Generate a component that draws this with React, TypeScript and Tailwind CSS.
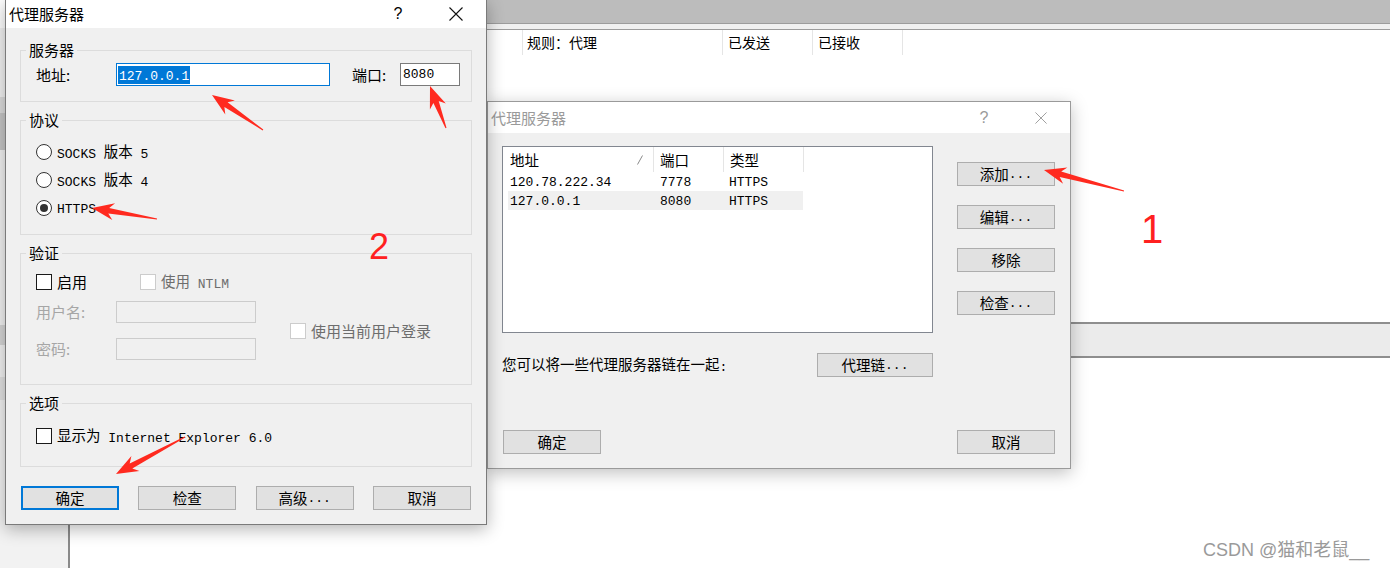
import React from "react";

const cjk = "font-['Noto_Sans_CJK_SC',sans-serif]";

type Arrow = { tail: [number, number]; tip: [number, number] };

const arrows: Arrow[] = [
  { tail: [263, 130], tip: [212, 95] },
  { tail: [446, 128], tip: [430, 86] },
  { tail: [157, 219], tip: [92, 208] },
  { tail: [185, 437], tip: [116, 474] },
  { tail: [1124, 191], tip: [1044, 170] },
];

function arrowPoints({ tail, tip }: Arrow) {
  const [x0, y0] = tail;
  const [x1, y1] = tip;
  const len = Math.hypot(x1 - x0, y1 - y0);
  const ux = (x1 - x0) / len;
  const uy = (y1 - y0) / len;
  const pt = (s: number, t: number) =>
    `${(x0 + ux * s - uy * t).toFixed(1)},${(y0 + uy * s + ux * t).toFixed(1)}`;
  return [
    pt(0, -0.5),
    pt(len - 17, -2.8),
    pt(len - 22, -8.5),
    pt(len, 0),
    pt(len - 22, 8.5),
    pt(len - 17, 2.8),
    pt(0, 0.5),
  ].join(" ");
}

// SimSun-like text: ascii in mono, CJK in Noto
const Sim = ({ text }: { text: string }) => {
  const mixed = /[^\x00-\x7f]/.test(text);
  return (
    <>
      {(text.match(/[\x00-\x7f]+|[^\x00-\x7f]+/g) || []).map((run, i) =>
        /^[\x00-\x7f]/.test(run) ? (
          <span
            key={i}
            className={`font-['Liberation_Mono',monospace] text-[13px] whitespace-pre ${mixed ? "relative top-[1px]" : ""}`}
          >
            {run}
          </span>
        ) : (
          <span key={i} className="font-['Noto_Sans_CJK_SC',sans-serif] text-[14.5px]">
            {run}
          </span>
        )
      )}
    </>
  );
};

const CloseIcon = ({ size, color }: { size: number; color: string }) => (
  <svg width={size} height={size} viewBox="0 0 14 14">
    <path d="M0.5 0.5L13.5 13.5M13.5 0.5L0.5 13.5" stroke={color} strokeWidth={1.1} fill="none" />
  </svg>
);

const Btn = ({ label, className = "", primary }: { label: string; className?: string; primary?: boolean }) => (
  <div
    className={`h-[24px] flex items-center justify-center bg-[#e1e1e1] text-black leading-[20px] ${
      primary ? "border-2 border-[#0078d7]" : "border border-[#adadad]"
    } ${className}`}
  >
    <Sim text={label} />
  </div>
);

const Radio = ({ label, checked }: { label: string; checked?: boolean }) => (
  <div className="h-[20px] flex items-center gap-[5px]">
    <span className="w-[16px] h-[16px] rounded-full border border-[#333] bg-white flex items-center justify-center">
      {checked && <span className="w-[8px] h-[8px] rounded-full bg-[#333]" />}
    </span>
    <span className="leading-[20px] text-black">
      <Sim text={label} />
    </span>
  </div>
);

const Check = ({ label, disabled, yahei }: { label: string; disabled?: boolean; yahei?: boolean }) => (
  <div className="h-[20px] flex items-center gap-[5px]">
    <span
      className={`w-[16px] h-[16px] bg-white border ${disabled ? "border-[#cccccc]" : "border-[#1a1a1a]"}`}
    />
    {yahei ? (
      <span className={`text-[15px] leading-[20px] ${cjk} ${disabled ? "text-[#6d6d6d]" : "text-black"}`}>
        {label}
      </span>
    ) : (
      <span className={`leading-[20px] ${disabled ? "text-[#6d6d6d]" : "text-black"}`}>
        <Sim text={label} />
      </span>
    )}
  </div>
);

const Group = ({ label, className = "", children }: { label: string; className?: string; children: React.ReactNode }) => (
  <fieldset className={`border border-[#dcdcdc] ${className}`}>
    <legend className={`ml-[5px] px-[3px] text-[15px] leading-[20px] text-black ${cjk}`}>{label}</legend>
    {children}
  </fieldset>
);

const Background = () => (
  <div className="flex h-full">
    <div className="w-[70px] flex flex-col border-r-2 border-[#8a8a8a] bg-[#f2f2f2]">
      <div className="h-[28px] bg-white" />
      <div className="h-[69px]" />
      <div className="h-[16px] bg-[#dcdcdc]" />
      <div className="h-[37px] bg-[#c6c6c6]" />
      <div className="h-[175px]" />
      <div className="h-[20px] bg-[#d6d6d6]" />
      <div className="h-[32px]" />
      <div className="h-[23px] bg-[#e2e2e2]" />
    </div>
    <div className="flex-1 flex flex-col">
      <div className="h-[23px] bg-[#bcbcbc]" />
      <div className="h-[1px] bg-[#9c9c9c]" />
      <div className="h-[5px] bg-[#f0f0f0]" />
      <div className="h-[1px] bg-[#9c9c9c]" />
      <div className={`h-[25px] flex text-[14px] leading-[25px] text-black ${cjk}`}>
        <div className="w-[453px] border-r border-[#e5e5e5]" />
        <div className="w-[200px] pl-[4px] border-r border-[#e5e5e5]">规则：代理</div>
        <div className="w-[90px] pl-[5px] border-r border-[#e5e5e5]">已发送</div>
        <div className="w-[90px] pl-[5px] border-r border-[#e5e5e5]">已接收</div>
      </div>
      <div className="h-[267px]" />
      <div className="h-[36px] border-y-2 border-[#8e8e8e] bg-[#ebebeb]" />
    </div>
  </div>
);

const ServerDialog = () => (
  <div className="absolute left-[5px] top-0 w-[482px] h-[525px] flex flex-col bg-[#f0f0f0] border-x border-b border-[#7a7a7a] shadow-[0_4px_16px_rgba(0,0,0,0.3)]">
    <div className="h-[28px] shrink-0 bg-white flex items-center pl-[3px] pr-[7px]">
      <span className={`text-[15px] leading-[20px] text-black ${cjk}`}>代理服务器</span>
      <span className="flex-1" />
      <span className="w-[46px] text-center text-[16px] leading-[20px] text-black font-['Liberation_Sans',sans-serif]">?</span>
      <span className="w-[46px] ml-[12px] flex justify-center">
        <CloseIcon size={14} color="#111" />
      </span>
    </div>

    <div className="flex flex-col px-[14px]">
      <Group label="服务器" className="mt-[12px]">
        <div className={`flex items-center pl-[15px] pt-[3px] pb-[15px] text-[15px] text-black ${cjk}`}>
          <span className="w-[80px] leading-[20px]">地址:</span>
          <div className="w-[214px] h-[23px] border border-[#0078d7] bg-white flex items-center pl-[1px]">
            <span className="bg-[#0078d7] text-white leading-[15px] px-px">
              <Sim text="127.0.0.1" />
            </span>
          </div>
          <span className="ml-[22px] w-[48px] leading-[20px]">端口:</span>
          <div className="w-[60px] h-[23px] border border-[#7a7a7a] bg-white flex items-center pl-[2px] leading-[15px]">
            <Sim text="8080" />
          </div>
        </div>
      </Group>

      <Group label="协议" className="mt-[8px]">
        <div className="flex flex-col gap-[8px] pl-[15px] pt-[12px] pb-[16px]">
          <Radio label="SOCKS 版本 5" />
          <Radio label="SOCKS 版本 4" />
          <Radio label="HTTPS" checked />
        </div>
      </Group>

      <Group label="验证" className="mt-[8px]">
        <div className="flex flex-col pl-[15px] pt-[9px] pb-[24px]">
          <div className="h-[20px] flex items-center">
            <div className="w-[104px]">
              <Check label="启用" yahei />
            </div>
            <Check label="使用 NTLM" disabled />
          </div>
          <div className="mt-[9px] flex items-center">
            <div className={`flex flex-col gap-[15px] text-[15px] text-[#a6a6a6] ${cjk}`}>
              <div className="h-[22px] flex items-center">
                <span className="w-[80px] leading-[20px]">用户名:</span>
                <div className="w-[140px] h-[22px] border border-[#cccccc] bg-[#f0f0f0]" />
              </div>
              <div className="h-[22px] flex items-center">
                <span className="w-[80px] leading-[20px]">密码:</span>
                <div className="w-[140px] h-[22px] border border-[#cccccc] bg-[#f0f0f0]" />
              </div>
            </div>
            <div className="ml-[34px]">
              <Check label="使用当前用户登录" disabled yahei />
            </div>
          </div>
        </div>
      </Group>

      <Group label="选项" className="mt-[8px]">
        <div className="pl-[15px] pt-[13px] pb-[20px]">
          <Check label="显示为 Internet Explorer 6.0" />
        </div>
      </Group>

      <div className="mt-[19px] flex justify-between px-[1px]">
        <Btn label="确定" primary className="w-[98px]" />
        <Btn label="检查" className="w-[98px]" />
        <Btn label="高级..." className="w-[98px]" />
        <Btn label="取消" className="w-[98px]" />
      </div>
    </div>
  </div>
);

const rows = [
  { addr: "120.78.222.34", port: "7778", type: "HTTPS", selected: false },
  { addr: "127.0.0.1", port: "8080", type: "HTTPS", selected: true },
];

const ListBox = () => (
  <div className="h-[187px] border border-[#828790] bg-white flex flex-col text-black">
    <div className="h-[25px] flex leading-[20px]">
      <div className="w-[151px] pl-[7px] pr-[10px] border-r border-[#e5e5e5] flex items-center justify-between">
        <span>
          <Sim text="地址" />
        </span>
        <svg width="6" height="10" viewBox="0 0 6 10">
          <path d="M5.5 0.5L0.5 9.5" stroke="#8a8a8a" strokeWidth="1" />
        </svg>
      </div>
      <div className="w-[70px] pl-[6px] border-r border-[#e5e5e5] flex items-center">
        <Sim text="端口" />
      </div>
      <div className="w-[80px] pl-[6px] border-r border-[#e5e5e5] flex items-center">
        <Sim text="类型" />
      </div>
    </div>
    {rows.map((r) => (
      <div key={r.addr} className={`ml-[5px] w-[295px] h-[19px] flex items-center leading-[19px] ${r.selected ? "bg-[#f0f0f0]" : ""}`}>
        <span className="w-[145px] pl-[2px]">
          <Sim text={r.addr} />
        </span>
        <span className="w-[70px] pl-[7px]">
          <Sim text={r.port} />
        </span>
        <span className="w-[80px] pl-[6px]">
          <Sim text={r.type} />
        </span>
      </div>
    ))}
  </div>
);

const ChainDialog = () => (
  <div className="absolute left-[487px] top-[101px] w-[584px] h-[368px] flex flex-col bg-[#f0f0f0] border border-[#9a9a9a] shadow-[0_4px_16px_rgba(0,0,0,0.25)]">
    <div className="h-[31px] shrink-0 bg-white flex items-center pl-[3px] pr-[6px]">
      <span className={`text-[15px] leading-[20px] text-[#9a9a9a] ${cjk}`}>代理服务器</span>
      <span className="flex-1" />
      <span className="w-[46px] text-center text-[16px] leading-[20px] text-[#9a9a9a] font-['Liberation_Sans',sans-serif]">?</span>
      <span className="w-[46px] ml-[11px] flex justify-center">
        <CloseIcon size={12} color="#9a9a9a" />
      </span>
    </div>
    <div className="flex-1 flex flex-col pt-[13px] pl-[14px] pr-[15px] pb-[14px]">
      <div className="flex">
        <div className="w-[431px] flex flex-col">
          <ListBox />
          <div className="mt-[20px] h-[24px] flex items-center justify-between">
            <span className="text-black leading-[20px]">
              <Sim text="您可以将一些代理服务器链在一起:" />
            </span>
            <Btn label="代理链..." className="w-[116px]" />
          </div>
        </div>
        <div className="ml-[24px] w-[98px] pt-[16px] flex flex-col gap-[19px]">
          <Btn label="添加..." />
          <Btn label="编辑..." />
          <Btn label="移除" />
          <Btn label="检查..." />
        </div>
      </div>
      <div className="mt-auto flex justify-between pl-[1px]">
        <Btn label="确定" className="w-[98px]" />
        <Btn label="取消" className="w-[98px]" />
      </div>
    </div>
  </div>
);

const Annotations = () => (
  <>
    <svg className="absolute inset-0 pointer-events-none" width={1390} height={568}>
      {arrows.map((a, i) => (
        <polygon key={i} points={arrowPoints(a)} fill="#ff2a1f" />
      ))}
    </svg>
    <span className="absolute left-[369px] top-[229px] text-[36px] leading-none text-[#ff2020] font-['Liberation_Sans',sans-serif]">
      2
    </span>
    <span className="absolute left-[1141px] top-[209px] text-[40px] leading-none text-[#ff2020] font-['Liberation_Sans',sans-serif]">
      1
    </span>
    <span className="absolute left-[1203px] top-[538px] text-[18px] leading-[24px] text-[#9a9a9a] font-['Liberation_Sans','Noto_Sans_CJK_SC',sans-serif]">
      CSDN @猫和老鼠__
    </span>
  </>
);

export default function App() {
  return (
    <div className="relative w-[1390px] h-[568px] overflow-hidden bg-white">
      <Background />
      <ChainDialog />
      <ServerDialog />
      <Annotations />
    </div>
  );
}
